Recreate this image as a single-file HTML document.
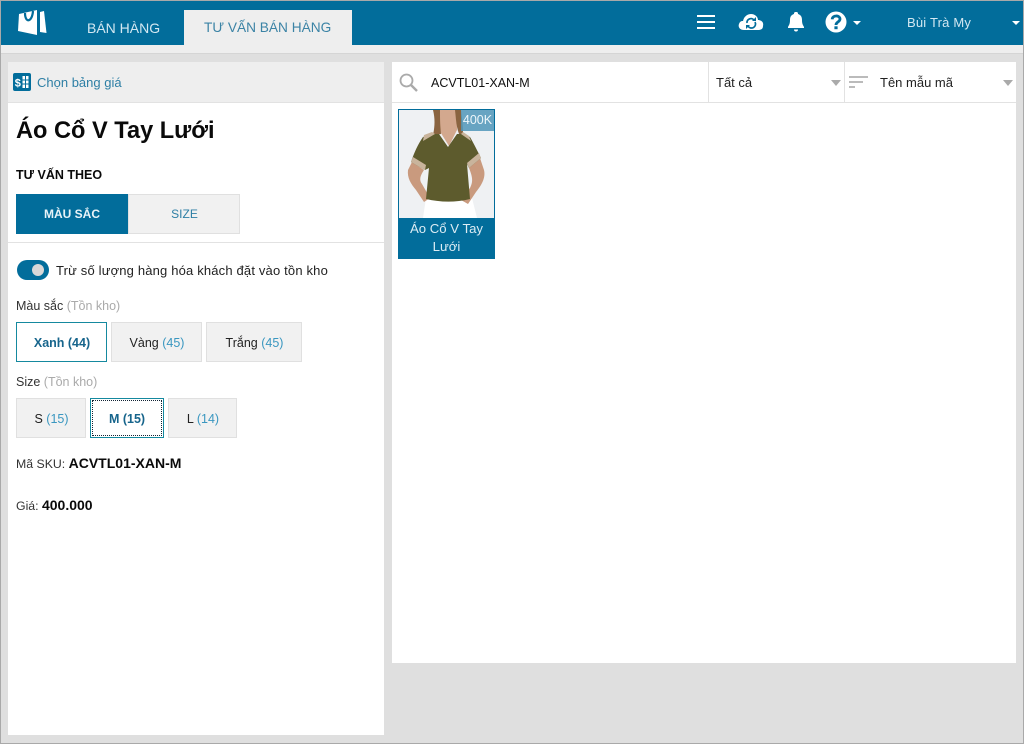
<!DOCTYPE html>
<html><head><meta charset="utf-8"><style>
html,body{margin:0;padding:0}
body{width:1024px;height:744px;overflow:hidden;position:relative;background:#dfdfdf;font-family:"Liberation Sans","Noto Sans CJK SC",sans-serif;color:#111}
.a{position:absolute;white-space:nowrap}
.b{position:absolute;box-sizing:border-box;background:#f1f1f1;border:1px solid #e0e0e0;text-align:center;font-size:12.5px;color:#222;white-space:nowrap;padding-left:1px}
.b i{font-style:normal;color:#3a97c0}
.arrow{position:absolute;width:0;height:0;border-left:6px solid transparent;border-right:6px solid transparent;border-top:6px solid #aaa}
</style></head><body>
<div class="a" style="left:0;top:0;width:1024px;height:744px;box-sizing:border-box;border:1px solid #a9a9a9;z-index:9"></div>
<div class="a" style="left:0;top:1px;width:1024px;height:44px;background:#026d9b"></div>
<div class="a" style="left:0;top:45px;width:1024px;height:8px;background:#eee;border-bottom:1px solid #d5d5d5"></div>
<svg class="a" style="left:0;top:0" width="60" height="45" viewBox="0 0 60 45"><path fill="#fff" d="M19 14 L37 10 L37 35 L18 31 Z"/><path fill="none" stroke="#026d9b" stroke-width="2.200" d="M25 13 C25 23 32 23 33 11"/><path fill="#fff" d="M40 12 L44 11 L46.500 33 L40 32 Z"/></svg>
<div class="a" style="left:87px;top:18px;font-size:14px;line-height:20px;color:#d3e8f2">BÁN HÀNG</div>
<div class="a" style="left:184px;top:10px;width:168px;height:35px;background:#eee"></div>
<div class="a" style="left:204px;top:18px;font-size:13.700px;line-height:20px;color:#3b83a5">TƯ VẤN BÁN HÀNG</div>
<svg class="a" style="left:696px;top:14px" width="20" height="16"><path stroke="#fff" stroke-width="2" d="M1 2H19M1 8H19M1 14H19"/></svg>
<svg class="a" style="left:738px;top:12px" width="26" height="20" viewBox="0 0 26 20"><path fill="#fff" d="M6 18 C1 18 0 14 1 12 C2 9 4 9 5 9 C6 4 10 2 13 2 C17 2 20 5 20 8 C23 8 26 10 25 14 C25 17 23 18 20 18 Z"/><path fill="none" stroke="#026d9b" stroke-width="1.700" d="M9 11 A4 4 0 0 1 16 8 M17 10 A4 4 0 0 1 10 14"/><path fill="#026d9b" d="M14 9H18V5ZM12 13H8V17Z"/></svg>
<svg class="a" style="left:787px;top:11px" width="18" height="21" viewBox="0 0 18 21"><path fill="#fff" d="M9 1 C11 1 11 2 11 3 C14 4 15 6 15 9 C15 13 16 14 17 16 L17 17 L1 17 L1 16 C2 14 3 13 3 9 C3 6 4 4 7 3 C7 2 7 1 9 1Z"/><path fill="#fff" d="M7 18.500H11A2 2 0 0 1 7 18.500Z"/></svg>
<svg class="a" style="left:825px;top:11px" width="22" height="22" viewBox="0 0 22 22"><circle cx="11" cy="11" r="10.500" fill="#fff"/><path fill="none" stroke="#026d9b" stroke-width="2.800" d="M7.200 8.300 C7.500 3.800 15 4 15 8 C15 11 11 10.800 11 14"/><rect x="9.400" y="15.300" width="3.200" height="2.900" fill="#026d9b"/></svg>
<div class="arrow" style="left:853px;top:21px;border-left-width:4px;border-right-width:4px;border-top:4px solid #fff"></div>
<div class="a" style="left:907px;top:14px;font-size:13px;line-height:18px;letter-spacing:.2px;color:#d3e8f2">Bùi Trà My</div>
<div class="arrow" style="left:1012px;top:21px;border-left-width:4px;border-right-width:4px;border-top:4px solid #fff"></div>

<div class="a" style="left:8px;top:62px;width:376px;height:673px;background:#fff"></div>
<div class="a" style="left:8px;top:62px;width:376px;height:40px;background:#eee;border-bottom:1px solid #e2e2e2"></div>
<svg class="a" style="left:13px;top:73px" width="18" height="18" viewBox="0 0 18 18"><rect width="18" height="18" rx="2" fill="#026d9b"/><rect x="9.500" y="3" width="6" height="12" fill="#fff"/><path stroke="#026d9b" d="M12.500 3V15M9.500 7H16M9.500 11H16"/><text x="1.800" y="13.500" font-family="Liberation Sans" font-weight="bold" font-size="11" fill="#fff">$</text></svg>
<div class="a" style="left:37px;top:74px;font-size:13px;line-height:18px;color:#2e7fa5">Chọn bảng giá</div>
<div class="a" style="left:16px;top:115px;font-size:23.600px;line-height:32px;font-weight:bold;color:#0a0a0a">Áo Cổ V Tay Lưới</div>
<div class="a" style="left:16px;top:167px;font-size:12.500px;line-height:17px;font-weight:bold;color:#0a0a0a">TƯ VẤN THEO</div>
<div class="a" style="left:16px;top:194px;width:112px;height:40px;background:#026d9b;color:#e8f3f8;font-size:12px;font-weight:bold;line-height:40px;text-align:center">MÀU SẮC</div>
<div class="b" style="left:128px;top:194px;width:112px;height:40px;line-height:38px;font-size:12px;color:#2e7fa5">SIZE</div>
<div class="a" style="left:8px;top:242px;width:376px;height:1px;background:#e2e2e2"></div>
<div class="a" style="left:17px;top:260px;width:32px;height:20px;border-radius:10px;background:#026d9b"></div>
<div class="a" style="left:32px;top:264px;width:12px;height:12px;border-radius:6px;background:#d8d8d8"></div>
<div class="a" style="left:56px;top:262px;font-size:13px;line-height:17px;color:#222;letter-spacing:.17px">Trừ số lượng hàng hóa khách đặt vào tồn kho</div>
<div class="a" style="left:16px;top:298px;font-size:12.500px;line-height:17px;color:#333">Màu sắc <span style="color:#aaa">(Tồn kho)</span></div>
<div class="b" style="left:16px;top:322px;width:91px;height:40px;line-height:40px;background:#fff;border-color:#15899f;font-weight:bold;color:#17658c">Xanh (44)</div>
<div class="b" style="left:111px;top:322px;width:91px;height:40px;line-height:40px">Vàng <i>(45)</i></div>
<div class="b" style="left:206px;top:322px;width:96px;height:40px;line-height:40px">Trắng <i>(45)</i></div>
<div class="a" style="left:16px;top:374px;font-size:12.500px;line-height:17px;color:#333">Size <span style="color:#aaa">(Tồn kho)</span></div>
<div class="b" style="left:16px;top:398px;width:70px;height:40px;line-height:40px">S <i>(15)</i></div>
<div class="b" style="left:90px;top:398px;width:74px;height:40px;line-height:40px;background:#fff;border-color:#15899f;font-weight:bold;color:#17658c;padding-left:0">M (15)<span class="a" style="left:1px;top:1px;right:1px;bottom:1px;border:1px dotted #123"></span></div>
<div class="b" style="left:168px;top:398px;width:69px;height:40px;line-height:40px">L <i>(14)</i></div>
<div class="a" style="left:16px;top:454px;font-size:12.300px;line-height:18px;color:#333">Mã SKU: <b style="font-size:14px;color:#0a0a0a">ACVTL01-XAN-M</b></div>
<div class="a" style="left:16px;top:496px;font-size:12.300px;line-height:18px;color:#333">Giá: <b style="font-size:14px;color:#0a0a0a">400.000</b></div>

<div class="a" style="left:392px;top:62px;width:624px;height:601px;background:#fff"></div>
<div class="a" style="left:392px;top:102px;width:624px;height:1px;background:#e2e2e2"></div>
<div class="a" style="left:708px;top:62px;width:1px;height:40px;background:#e2e2e2"></div>
<div class="a" style="left:844px;top:62px;width:1px;height:40px;background:#e2e2e2"></div>
<svg class="a" style="left:399px;top:73px" width="19" height="19"><circle cx="7.500" cy="7.500" r="6" fill="none" stroke="#aaa" stroke-width="1.800"/><path stroke="#aaa" stroke-width="2.400" d="M12 12L18 18"/></svg>
<div class="a" style="left:431px;top:74px;font-size:12.500px;line-height:18px;color:#111">ACVTL01-XAN-M</div>
<div class="a" style="left:716px;top:74px;font-size:13px;line-height:18px;color:#222">Tất cả</div>
<div class="arrow" style="left:831px;top:80px;border-left-width:5px;border-right-width:5px"></div>
<svg class="a" style="left:849px;top:76px" width="19" height="14"><path stroke="#bbb" stroke-width="2" d="M0 1H19M0 6H14M0 11H6"/></svg>
<div class="a" style="left:880px;top:74px;font-size:13px;line-height:18px;color:#222">Tên mẫu mã</div>
<div class="arrow" style="left:1003px;top:80px;border-left-width:5px;border-right-width:5px"></div>

<div class="a" style="left:398px;top:109px;width:97px;height:150px;background:#026d9b"></div>
<svg class="a" style="left:399px;top:110px" width="95" height="108" viewBox="0 0 95 108">
<rect width="95" height="108" fill="#eff1f3"/>
<path fill="#fff" d="M27 88H73L78 108H24Z"/>
<path fill="#c99a7e" d="M13 52 L9 60 C8 68 12 74 17 80 L25 92 L31 88 L23 74 C20 70 21 66 25 60Z"/>
<path fill="#c99a7e" d="M81 48 L85 60 C87 68 82 76 77 82 L69 94 L62 90 L71 78 C74 72 74 68 70 58Z"/>
<path fill="#d3a88e" d="M40 0H58L58 20L50 36L40 20Z"/>
<path fill="#8a6440" d="M34 0 C36 8 36 16 34 25 L42 24 C41 14 41 8 41 0ZM56 0 C57 8 57 16 60 24 L64 25 C64 16 63 8 62 0Z"/>
<path fill="#5d5b2d" d="M33 24 L40 24 L49 37 L58 24 L64 24 L71 27 C75 34 79 42 82 48 L70 58 L68 54 L71 89 C55 93 40 92 27 89 L30 58 L26 60 L12 52 C15 43 19 34 24 27Z"/>
<path fill="#c9b49c" d="M25 25 L33 22 L36 24 L24 31Z M64 22 L70 26 L72 31 L62 24Z M12 52 L14 47 L27 55 L26 60Z M82 48 L80 43 L68 53 L70 58Z"/>
</svg>
<div class="a" style="left:461px;top:110px;width:33px;height:21px;background:rgba(80,150,185,.85);color:#eef6fa;font-size:12.500px;line-height:21px;text-align:center">400K</div>
<div class="a" style="left:398px;top:220px;font-size:13.200px;line-height:18px;color:#dcecf4;text-align:center;width:97px;white-space:normal">Áo Cổ V Tay<br>Lưới</div>
</body></html>
